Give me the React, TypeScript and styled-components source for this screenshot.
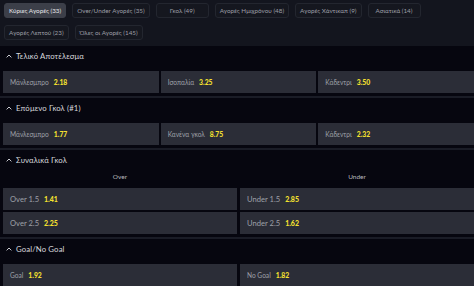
import styled, { createGlobalStyle } from 'styled-components';

const GlobalStyle = createGlobalStyle`
  html, body {
    margin: 0;
    padding: 0;
    background: #06060f;
    font-family: Lato, "Noto Sans", sans-serif;
  }
`;

const tabs = [
  { label: 'Κύριες Αγορές (33)', active: true },
  { label: 'Over/Under Αγορές (35)' },
  { label: 'Γκολ (49)' },
  { label: 'Αγορές Ημιχρόνου (48)' },
  { label: 'Αγορές Χάντικαπ (9)' },
  { label: 'Ασιατικά (14)' },
  { label: 'Αγορές Λεπτού (23)' },
  { label: 'Όλες οι Αγορές (145)' },
];

type Odd = { label: string; value: string };

const sections: { title: string; odds: Odd[] }[] = [
  {
    title: 'Τελικό Αποτέλεσμα',
    odds: [
      { label: 'Μάνλεσμπρο', value: '2.18' },
      { label: 'Ισοπαλία', value: '3.25' },
      { label: 'Κάδεντρι', value: '3.50' },
    ],
  },
  {
    title: 'Επόμενο Γκολ (#1)',
    odds: [
      { label: 'Μάνλεσμπρο', value: '1.77' },
      { label: 'Κανένα γκολ', value: '8.75' },
      { label: 'Κάδεντρι', value: '2.32' },
    ],
  },
];

const overUnder = [
  { title: 'Over', odds: [{ label: 'Over 1.5', value: '1.41' }, { label: 'Over 2.5', value: '2.25' }] },
  { title: 'Under', odds: [{ label: 'Under 1.5', value: '2.85' }, { label: 'Under 2.5', value: '1.62' }] },
];

const goalOdds: Odd[] = [
  { label: 'Goal', value: '1.92' },
  { label: 'No Goal', value: '1.82' },
];

export default function App() {
  return (
    <Page>
      <GlobalStyle />
      <TabBar>
        {tabs.map(t => (
          <Tab key={t.label} active={!!t.active}>
            {t.label}
          </Tab>
        ))}
      </TabBar>

      {sections.map(s => (
        <Section key={s.title}>
          <SectionHeader>
            <Chevron />
            {s.title}
          </SectionHeader>
          <Body>
            <OddsGrid cols={3}>
              {s.odds.map(o => (
                <OddButton key={o.label} {...o} />
              ))}
            </OddsGrid>
          </Body>
        </Section>
      ))}

      <Section>
        <SectionHeader>
          <Chevron />
          Συναλικά Γκολ
        </SectionHeader>
        <Body>
          <OddsGrid cols={2}>
            {overUnder.map(col => (
              <Column key={col.title}>
                <ColumnLabel>{col.title}</ColumnLabel>
                {col.odds.map(o => (
                  <OddButton key={o.label} {...o} large />
                ))}
              </Column>
            ))}
          </OddsGrid>
        </Body>
      </Section>

      <Section>
        <SectionHeader>
          <Chevron />
          Goal/No Goal
        </SectionHeader>
        <Body>
          <OddsGrid cols={2}>
            {goalOdds.map(o => (
              <OddButton key={o.label} {...o} />
            ))}
          </OddsGrid>
        </Body>
      </Section>
    </Page>
  );
}

function Chevron() {
  return (
    <svg width="6" height="4" viewBox="0 0 6 4">
      <polyline points="0.6,3.4 3,1 5.4,3.4" fill="none" stroke="#c9cad0" strokeWidth="1" />
    </svg>
  );
}

function OddButton({ label, value, large }: Odd & { large?: boolean }) {
  return (
    <OddBox>
      <OddLabel large={!!large}>{label}</OddLabel>
      <OddValue large={!!large}>{value}</OddValue>
    </OddBox>
  );
}

const Page = styled.div`
  width: 474px;
  height: 286px;
  overflow: hidden;
  background: #06060f;
`;

const TabBar = styled.div`
  background: #13151e;
  display: flex;
  flex-wrap: wrap;
  gap: 6px 6px;
  padding: 3px 4px 6px 4px;
  height: 37px;
`;

const Tab = styled.div<{ active: boolean }>`
  height: 15px;
  min-width: 53px;
  box-sizing: border-box;
  padding: 0 4px;
  display: flex;
  align-items: center;
  justify-content: center;
  border: 1px solid ${p => (p.active ? '#3c3f49' : '#23262f')};
  border-radius: 3px;
  background: ${p => (p.active ? '#3c3f49' : '#15171f')};
  color: ${p => (p.active ? '#e6e7ea' : '#9c9ea6')};
  font-size: 6.3px;
  white-space: nowrap;
`;

const Section = styled.section`
  border-bottom: 2px solid #1a1c26;
`;

const SectionHeader = styled.div`
  height: 20px;
  display: flex;
  align-items: center;
  gap: 4px;
  padding-left: 6px;
  color: #d6d7dc;
  font-size: 7.8px;
  letter-spacing: 0.1px;
`;

const Body = styled.div`
  padding: 5px 0 3px 3px;
`;

const OddsGrid = styled.div<{ cols: number }>`
  display: grid;
  grid-template-columns: repeat(${p => p.cols}, 1fr);
  gap: 2px ${p => (p.cols === 2 ? 3 : 2)}px;
`;

const Column = styled.div`
  display: flex;
  flex-direction: column;
  gap: 2px;
`;

const ColumnLabel = styled.div`
  height: 12px;
  margin-top: -5px;
  margin-bottom: 4px;
  display: flex;
  align-items: center;
  justify-content: center;
  color: #b8b9bf;
  font-size: 6.5px;
`;

const OddBox = styled.div`
  height: 22px;
  background: #2b2d37;
  display: flex;
  align-items: center;
  padding-left: 7px;
  gap: 5px;
`;

const OddLabel = styled.span<{ large: boolean }>`
  color: #9fa1a9;
  font-size: ${p => (p.large ? 7.6 : 6.6)}px;
`;

const OddValue = styled.span<{ large: boolean }>`
  color: #f4e02f;
  font-weight: 900;
  font-size: ${p => (p.large ? 7 : 6.8)}px;
`;
